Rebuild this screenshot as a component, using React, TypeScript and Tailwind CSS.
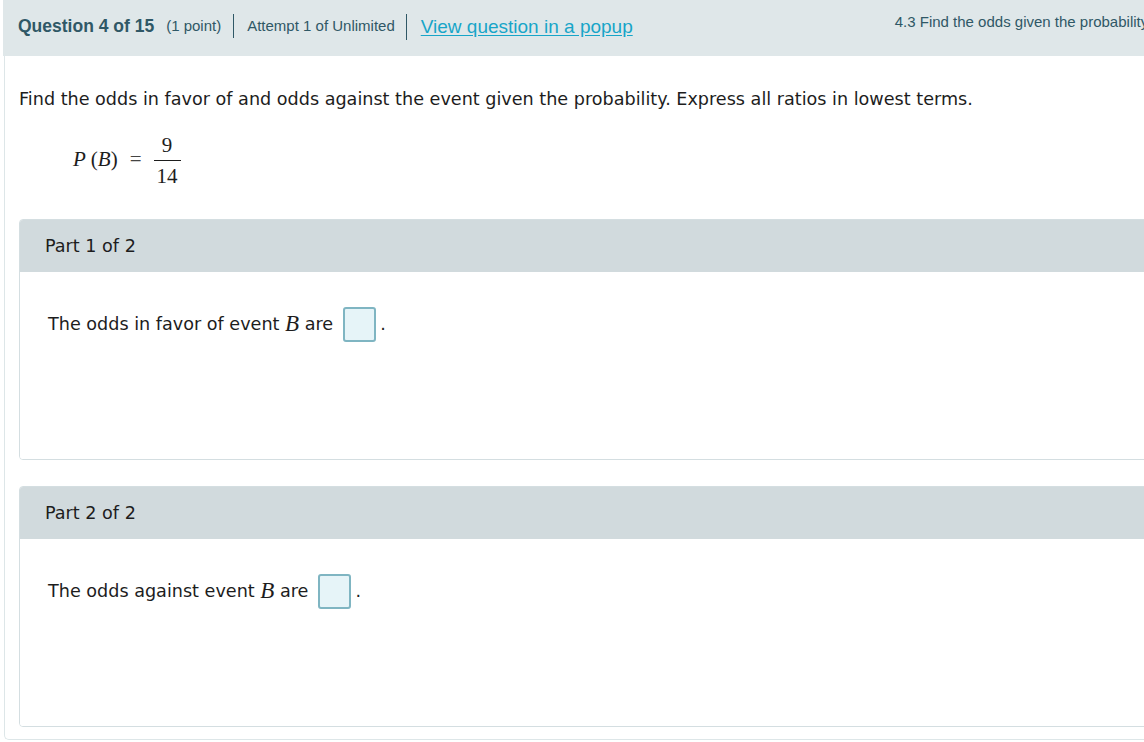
import React from "react";

const SANS = { fontFamily: '"DejaVu Sans", Verdana, sans-serif' };
const SERIF = { fontFamily: '"Liberation Serif", "Times New Roman", serif' };

function AnswerBox() {
  return (
    <span className="inline-block align-middle w-[33px] h-[35px] rounded-[3px] border-2 border-[#7fb5c2] bg-[#e6f4f8] mx-[10px]" />
  );
}

function Part({ label, children }: { label: string; children: React.ReactNode }) {
  return (
    <section className="w-[1150px] rounded-t-[4px] rounded-bl-[4px] border border-[#d4dee1] overflow-hidden">
      <div className="h-[52px] bg-[#d1dadd] flex items-center pl-[25px] text-[17.6px] text-[#1d1d1d]">
        {label}
      </div>
      <div className="h-[187px] bg-white pl-[28px] pt-[35px] text-[17.6px] text-[#1d1d1d]">
        {children}
      </div>
    </section>
  );
}

function Answer({ lead }: { lead: string }) {
  return (
    <>
      <span className="align-middle">{lead} </span>
      <span className="italic text-[23px] align-middle" style={SERIF}>
        B
      </span>
      <span className="align-middle"> are</span>
      <AnswerBox />
      <span className="align-middle -ml-[6px]">.</span>
    </>
  );
}

export default function App() {
  return (
    <div className="w-[1144px] h-[742px] overflow-hidden bg-white" style={SANS}>
      <header
        className="ml-[3px] h-[56px] w-[1160px] bg-[#dfe7e9] flex items-start pt-[12px] pl-[15px] text-[#2f5866] whitespace-nowrap"
        style={{ fontFamily: '"Liberation Sans", Arial, sans-serif' }}
      >
        <div className="flex items-center h-[28px]">
          <span className="font-bold text-[17.5px]">Question 4 of 15</span>
          <span className="text-[15px] ml-[12px]">(1 point)</span>
          <span className="w-px h-[24px] bg-[#2f5866] ml-[12px]" />
          <span className="text-[15px] ml-[13px]">Attempt 1 of Unlimited</span>
          <span className="w-px h-[26px] bg-[#2f5866] ml-[11px] mt-[2px]" />
          <a className="text-[19px] ml-[14px] mt-[3px] text-[#17a5c8] underline underline-offset-2">
            View question in a popup
          </a>
        </div>
        <span className="ml-[262px] text-[15px] leading-[20px]">
          4.3 Find the odds given the probability
        </span>
      </header>

      <div className="ml-[4px] h-[684px] w-[1160px] border-l border-b border-[#dde6e8] rounded-bl-[5px] pl-[14px]">
        <p className="pt-[31px] text-[17.6px] text-[#1d1d1d] leading-[24px]">
          Find the odds in favor of and odds against the event given the probability. Express all ratios in lowest terms.
        </p>

        <div className="mt-[16px] ml-[54px] flex items-center text-[#1d1d1d] h-[66px]" style={SERIF}>
          <span className="italic text-[21px]">P</span>
          <span className="text-[21px] ml-[5px]">(</span>
          <span className="italic text-[21px]">B</span>
          <span className="text-[21px]">)</span>
          <span className="text-[21px] ml-[12px] text-[#444]">=</span>
          <span className="ml-[12px] inline-flex flex-col items-center text-[21px] leading-[24px]">
            <span className="px-[3px]">9</span>
            <span className="h-px w-[27px] bg-[#1d1d1d] my-[3px]" />
            <span className="px-[3px]">14</span>
          </span>
        </div>

        <div className="mt-[26px] flex flex-col gap-[26px]">
          <Part label="Part 1 of 2">
            <Answer lead="The odds in favor of event" />
          </Part>
          <Part label="Part 2 of 2">
            <Answer lead="The odds against event" />
          </Part>
        </div>
      </div>
    </div>
  );
}
